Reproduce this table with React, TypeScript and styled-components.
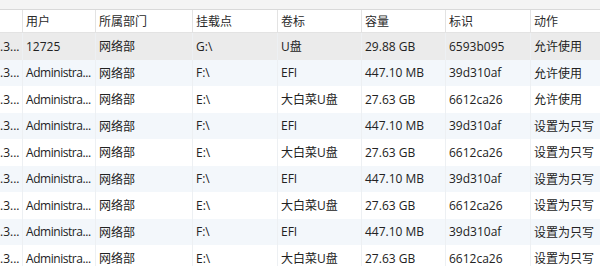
import React from 'react'
import styled, { createGlobalStyle } from 'styled-components'

const GlobalStyle = createGlobalStyle`
  html, body {
    margin: 0;
    padding: 0;
    background: #fff;
  }
  body {
    font-family: "Open Sans", "Noto Sans CJK SC", sans-serif;
    font-size: 12px;
    color: #222;
    overflow: hidden;
  }
`

const COLS = '23px 73px 97px 85px 84px 84px 85px 69px'

const Window = styled.div`
  width: 600px;
  height: 266px;
  overflow: hidden;
  background: #fff;
`

const TopStrip = styled.div`
  height: 9px;
  background: #f4f4f4;
  border-bottom: 1px solid #d9d9d9;
`

const HeaderRow = styled.div`
  display: grid;
  grid-template-columns: ${COLS};
  height: 22px;
  background: #fff;
  border-bottom: 1px solid #e3e3e3;
`

const HeaderCell = styled.div`
  display: flex;
  align-items: center;
  padding-left: 3px;
  border-right: 1px solid #e3e3e3;
  color: #2a2a2a;
  white-space: nowrap;
  overflow: hidden;
  &:last-child {
    border-right: none;
  }
`

const Row = styled.div<{ $tone: 'selected' | 'alt' | 'plain' }>`
  display: grid;
  grid-template-columns: ${COLS};
  height: 26.5px;
  background: ${(p) =>
    p.$tone === 'selected' ? '#ebebeb' : p.$tone === 'alt' ? '#f3f7fb' : '#ffffff'};
`

const Cell = styled.div<{ $first?: boolean; $tight?: boolean }>`
  display: flex;
  align-items: center;
  padding-left: ${(p) => (p.$first ? '0' : '3px')};
  border-right: 1px solid #edf0f3;
  white-space: nowrap;
  overflow: hidden;
  color: #222;
  letter-spacing: ${(p) => (p.$tight ? '-0.45px' : 'normal')};
  &:last-child {
    border-right: none;
  }
`

const headers = ['', '用户', '所属部门', '挂载点', '卷标', '容量', '标识', '动作']

const efi = ['F:\\', 'EFI', '447.10 MB', '39d310af']
const dbc = ['E:\\', '大白菜U盘', '27.63 GB', '6612ca26']
const admin = 'Administra...'

const rows: string[][] = [
  ['12725', '网络部', 'G:\\', 'U盘', '29.88 GB', '6593b095', '允许使用'],
  [admin, '网络部', ...efi, '允许使用'],
  [admin, '网络部', ...dbc, '允许使用'],
  [admin, '网络部', ...efi, '设置为只写'],
  [admin, '网络部', ...dbc, '设置为只写'],
  [admin, '网络部', ...efi, '设置为只写'],
  [admin, '网络部', ...dbc, '设置为只写'],
  [admin, '网络部', ...efi, '设置为只写'],
  [admin, '网络部', ...dbc, '设置为只写'],
]

export default function App() {
  return (
    <Window>
      <GlobalStyle />
      <TopStrip />
      <HeaderRow>
        {headers.map((h, i) => (
          <HeaderCell key={i}>{h}</HeaderCell>
        ))}
      </HeaderRow>
      {rows.map((r, i) => (
        <Row key={i} $tone={i === 0 ? 'selected' : i % 2 === 1 ? 'alt' : 'plain'}>
          <Cell $first>.3...</Cell>
          {r.map((c, j) => (
            <Cell key={j} $tight={c === admin}>
              {c}
            </Cell>
          ))}
        </Row>
      ))}
    </Window>
  )
}
